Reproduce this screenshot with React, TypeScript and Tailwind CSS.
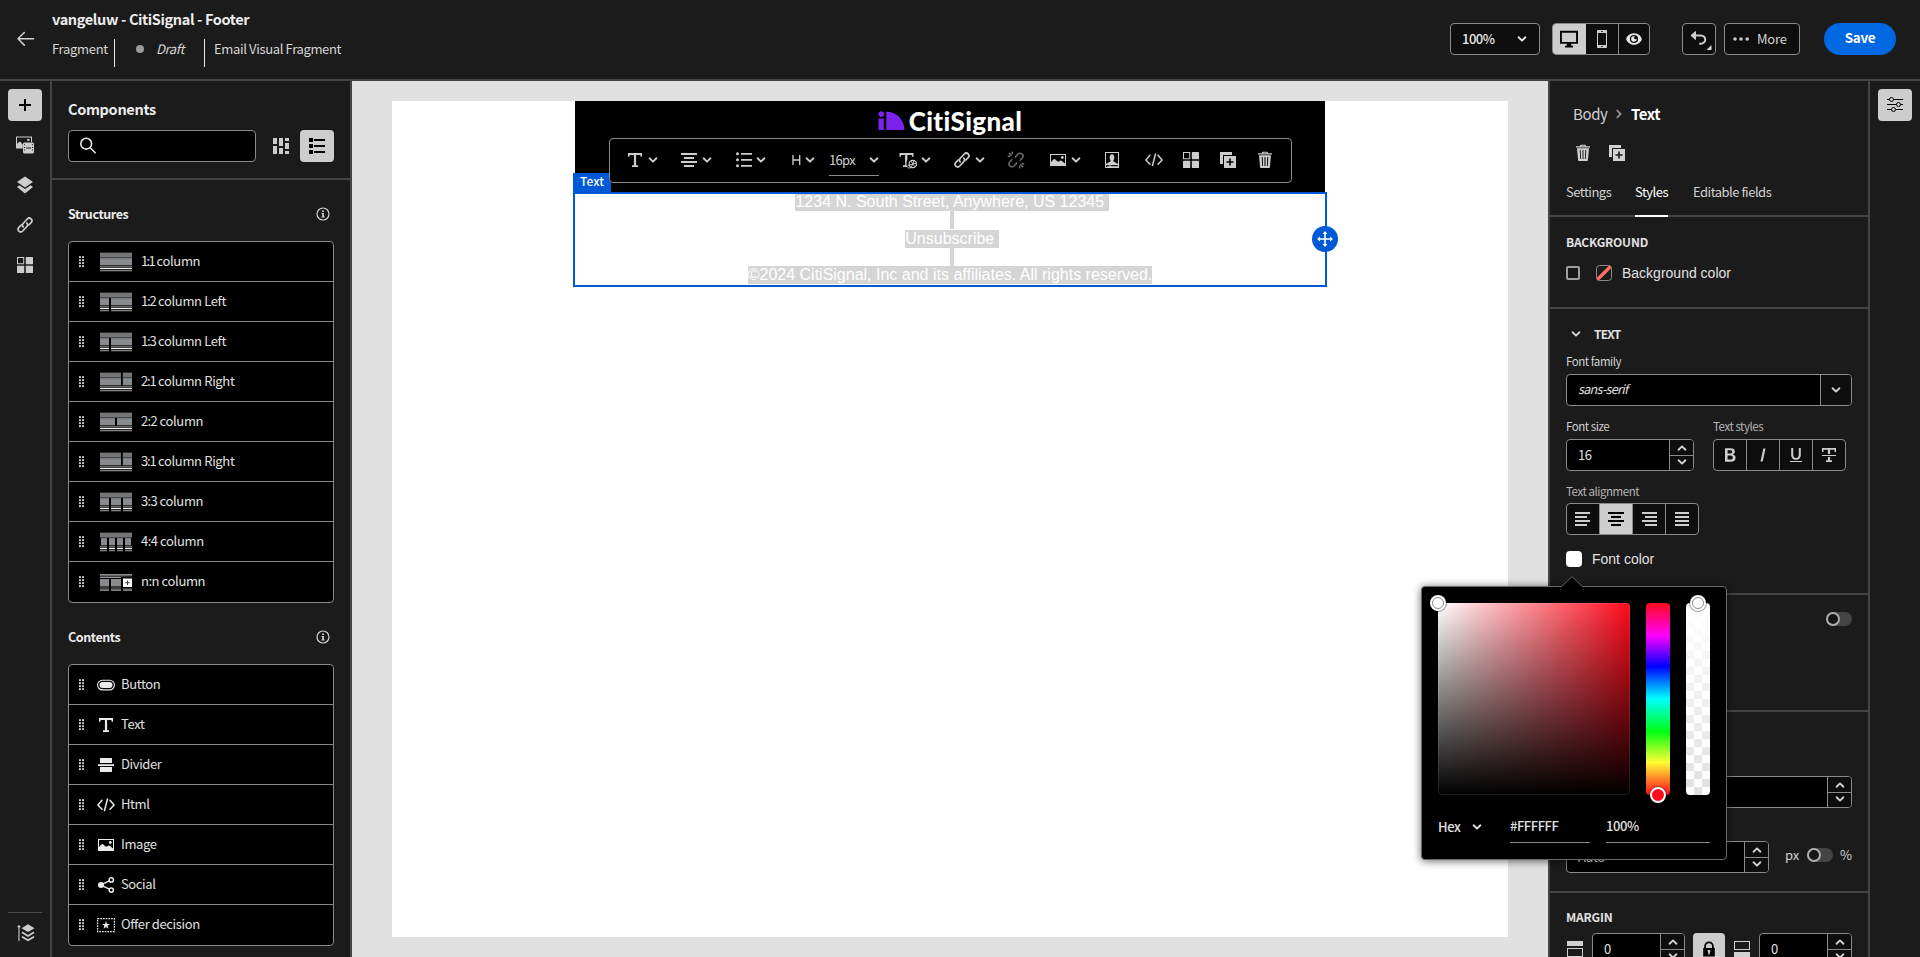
import type { ReactNode } from 'react';

/* ---------- icons ---------- */

type IconProps = { className?: string };

function Svg({ children, className = '', size = 18 }: { children: ReactNode; className?: string; size?: number }) {
  return (
    <svg width={size} height={size} viewBox="0 0 18 18" fill="currentColor" className={`block shrink-0 ${className}`}>
      {children}
    </svg>
  );
}

function Chevron({ className = '' }: IconProps) {
  return (
    <svg width="10" height="6" viewBox="0 0 10 6" fill="none" stroke="currentColor" strokeWidth="1.9" strokeLinecap="round" strokeLinejoin="round" className={`block shrink-0 ${className}`}>
      <path d="M1.6 1.3 5 4.6 8.4 1.3" />
    </svg>
  );
}

const TrashIcon = ({ className }: IconProps) => (
  <Svg className={className}>
    <path fillRule="evenodd" d="M6 2.2V1.8C6 1 6.600.8 7.200.8h3.600c.6 0 1.200.2 1.200 1v.4h4v1.200H2V2.200zM7.200 2.200h3.600v-.5H7.200zM3 4.200h12l-1.100 12.100a.8.8 0 0 1-.8.7H4.900a.8.8 0 0 1-.8-.7zM5.700 6l.5 9h.9L6.700 6zm2.800 0v9h1V6zm2.800 0-.4 9h.9l.5-9z" />
  </Svg>
);

const DuplicateIcon = ({ className }: IconProps) => (
  <Svg className={className}>
    <path d="M1 1h12v3H4v9H1z" />
    <path fillRule="evenodd" d="M5 5h12v12H5zM10.200 7.500v2.700H7.500v1.600h2.700v2.700h1.600v-2.700h2.700v-1.600h-2.700V7.500z" />
  </Svg>
);

const LinkIcon = ({ className }: IconProps) => (
  <Svg className={className}>
    <g fill="none" stroke="currentColor" strokeWidth="1.700" strokeLinecap="round">
      <path d="M7.200 10.900c-1.100-1.100-1-2.500.1-3.700l4-4.200c1.100-1.100 2.700-1.200 3.800-.2 1.100 1.100 1.100 2.600 0 3.800l-2.300 2.400" />
      <path d="M10.800 7.100c1.100 1.100 1 2.500-.1 3.700l-4 4.200c-1.100 1.100-2.700 1.200-3.800.2-1.100-1.100-1.100-2.600 0-3.800l2.300-2.400" />
    </g>
  </Svg>
);

const UnlinkIcon = ({ className }: IconProps) => (
  <Svg className={className}>
    <g fill="none" stroke="currentColor" strokeWidth="1.500" strokeLinecap="round">
      <path d="m8.300 6.100 2.600-2.800c1.100-1.100 3-1.300 4.200-.2 1.200 1.100 1.100 3 0 4.200l-2 2" />
      <path d="m9.700 11.900-2.600 2.800c-1.100 1.100-3 1.300-4.200.2-1.200-1.100-1.100-3 0-4.200l2-2" />
      <path d="M5.300 1.300v1.500M1.300 5.300h1.500M2.400 2.400l1.800 1.800M12.700 15.200v1.500M15.200 12.700h1.500M13.800 13.800l1.800 1.800" />
    </g>
  </Svg>
);

const GridIcon = ({ className }: IconProps) => (
  <Svg className={className}>
    <path fillRule="evenodd" d="M1 1h7.200v7.200H1zM2 2v5.200h5.200V2z" />
    <rect x="9.800" y="1" width="7.200" height="7.200" rx=".5" />
    <rect x="1" y="9.800" width="7.200" height="7.200" rx=".5" />
    <rect x="9.800" y="9.800" width="7.200" height="7.200" rx=".5" />
  </Svg>
);

const ImageIcon = ({ className }: IconProps) => (
  <Svg className={className}>
    <path fillRule="evenodd" d="M1 3h16v12H1zM2 4v7.200c1.300-1.500 2.500-3.200 3.500-3.200 1.200 0 2.800 2.800 3.700 2.800.7 0 1.500-1.300 2.400-1.300 1.300 0 2.700 1.500 4.400 3V4z" />
    <circle cx="13.300" cy="6.500" r="1.400" />
  </Svg>
);

const CodeIcon = ({ className }: IconProps) => (
  <Svg className={className}>
    <g fill="none" stroke="currentColor" strokeWidth="1.500" strokeLinecap="round" strokeLinejoin="round">
      <path d="M5 4.300.9 9 5 13.200M13 4.300 17.100 9 13 13.200M10.500 3 7.500 14.500" />
    </g>
  </Svg>
);

const TextIcon = ({ className }: IconProps) => (
  <Svg className={className}>
    <path d="M2 2h14v3.800h-1.300L14.300 4H10.100v10.300H12V16H6v-1.700h1.900V4H3.700L3.300 5.800H2z" />
  </Svg>
);

const TextGearIcon = ({ className }: IconProps) => (
  <Svg className={className}>
    <path d="M.5 2h14v3.800h-1.300L12.800 4H8.400v5L7.500 11v3.500L9 16H4v-1.700h2.100V4H2.200L1.800 5.800H.5z" />
    <g fill="none" stroke="currentColor">
      <circle cx="13.800" cy="13" r="3.700" strokeWidth="1.200" />
      <path d="M13.800 13 12 9.900M13.800 13l3.500-.8M13.800 13l-1.600 3.200M8.500 14.500l5.300-1.500M14.800 9.500l-1 3.500M13.800 13l2.200 2.800M8.500 16.800h4" strokeWidth=".9" />
    </g>
  </Svg>
);

const AlignIcon = ({ className, mode }: IconProps & { mode: 'left' | 'center' | 'right' | 'justify' }) => {
  const rows = {
    left: [[1, 15], [1, 12], [1, 15], [1, 12]],
    center: [[1, 16], [4, 10], [1, 16], [4, 10]],
    right: [[2, 15], [5, 12], [2, 15], [5, 12]],
    justify: [[2, 14], [2, 14], [2, 14], [2, 14]],
  }[mode];
  return (
    <Svg className={className}>
      {rows.map(([x, w], i) => (
        <rect key={i} x={x} y={2 + i * 4} width={w} height="2" />
      ))}
    </Svg>
  );
};

const BulletsIcon = ({ className }: IconProps) => (
  <Svg className={className}>
    <circle cx="2.500" cy="2.700" r="1.500" />
    <circle cx="2.500" cy="8.700" r="1.500" />
    <circle cx="2.500" cy="14.700" r="1.500" />
    <path d="M6 2h11v1.700H6zM6 8h11v1.700H6zM6 14h11v1.700H6z" />
  </Svg>
);

const PersonIcon = ({ className }: IconProps) => (
  <Svg className={className}>
    <path fillRule="evenodd" d="M2 1h14v16H2zM3 2v10.500h1.500c.3-1.400 2-1.500 3.100-2C8 10 7.200 9 6.900 8c-.5-2.300 0-4.700 2.100-4.700S11.600 5.700 11.100 8c-.3 1-1.100 2-.7 2.500 1.100.5 2.800.6 3.100 2H15V2zM3 14.500V16h1v-1.500zm3 0h9V14H3z" />
    <path d="M3.200 14.300h3v1H3.200zM8.200 14.300h6.600v1H8.200z" fill="#000" />
  </Svg>
);

const InfoIcon = ({ className }: IconProps) => (
  <svg width="14" height="14" viewBox="0 0 14 14" className={`block shrink-0 ${className}`}>
    <circle cx="7" cy="7" r="6" fill="none" stroke="currentColor" strokeWidth="1.200" />
    <path d="M6.100 3.400h1.800v1.500H6.100zM5.600 6h2.300v3.600h.7v.9H5.500v-.9h.7V6.900h-.6z" fill="currentColor" />
  </svg>
);

const Handle = ({ className = '' }: IconProps) => (
  <svg width="5" height="12" viewBox="0 0 5 12" fill="#d1d1d1" className={`block shrink-0 ${className}`}>
    {[0.2, 3.2, 6.2, 9.2].map((y) => (
      <g key={y}>
        <rect x="0" y={y} width="1.900" height="1.900" />
        <rect x="3.100" y={y} width="1.900" height="1.900" />
      </g>
    ))}
  </svg>
);

/* ---------- structure thumbnails ---------- */

type Gap = [x: number, width: number, y: number, height: number];

function Thumb({ gaps }: { gaps: Gap[] }) {
  return (
    <svg width="32" height="20" viewBox="0 0 32 20" className="block shrink-0">
      <rect y=".6" width="32" height="18.600" fill="#3c3c3c" />
      <rect y=".8" width="32" height="4.400" fill="#757575" />
      <rect y="6.200" width="32" height="7" fill="#878b8d" />
      <rect y="13.300" width="32" height="1" fill="#222" />
      <rect y="14.200" width="32" height=".8" fill="#777" />
      <rect y="15" width="32" height="1" fill="#111" />
      <rect y="15.800" width="32" height="1.200" fill="#f4f4f4" />
      <rect y="17" width="32" height="1" fill="#222" />
      <rect y="18" width="32" height="1.200" fill="#858585" />
      {gaps.map(([x, w, y, h], i) => (
        <rect key={i} x={x} y={y} width={w} height={h} fill="#000" />
      ))}
    </svg>
  );
}

function CustomThumb() {
  return (
    <svg width="32" height="20" viewBox="0 0 32 20" className="block shrink-0">
      <path d="M0 2h32v1.800H0z" fill="#8a8a8a" />
      <path d="M0 3.800h32v1H0z" fill="#333" />
      <path d="M0 4.800h21v1.200H0z" fill="#9a9a9a" />
      <path d="M0 7h9v7H0zM11 7h10v7H11z" fill="#878b8d" />
      <path d="M0 14h9v2H0zM11 14h10v2H11z" fill="#3a3a3a" />
      <path d="M0 16.500h9v2.500H0zM11 16.500h10v2.500H11zM23 16.500h9v2.500h-9z" fill="#808080" />
      <path d="M0 17.500h9v.6H0zM11 17.500h10v.6H11zM23 17.500h9v.6h-9z" fill="#444" />
      <path d="M23 6.500h9v8.500h-9z" fill="#fff" />
      <path d="M27 8.500h1v1.800h1.800v1H28v1.800h-1v-1.800h-1.800v-1H27z" fill="#444" />
    </svg>
  );
}

const structures: { ratio: string; tracking: string; label: string; thumb: ReactNode }[] = [
  { ratio: '1:1', tracking: 'tracking-[-1.700px]', label: 'column', thumb: <Thumb gaps={[]} /> },
  { ratio: '1:2', tracking: 'tracking-[-1.200px]', label: 'column Left', thumb: <Thumb gaps={[[9, 2, 6, 14]]} /> },
  { ratio: '1:3', tracking: 'tracking-[-1.200px]', label: 'column Left', thumb: <Thumb gaps={[[9, 2, 6, 14]]} /> },
  { ratio: '2:1', tracking: 'tracking-[-1.200px]', label: 'column Right', thumb: <Thumb gaps={[[21, 1.8, 0, 14]]} /> },
  { ratio: '2:2', tracking: 'tracking-[-0.700px]', label: 'column', thumb: <Thumb gaps={[[15, 2, 6, 8]]} /> },
  { ratio: '3:1', tracking: 'tracking-[-1.200px]', label: 'column Right', thumb: <Thumb gaps={[[21, 1.8, 0, 14]]} /> },
  { ratio: '3:3', tracking: 'tracking-[-0.700px]', label: 'column', thumb: <Thumb gaps={[[9, 2, 6, 14], [21, 2, 6, 14]]} /> },
  { ratio: '4:4', tracking: 'tracking-[-0.500px]', label: 'column', thumb: <Thumb gaps={[[0, 1, 6, 8], [7, 2, 6, 14], [15, 2, 6, 14], [23, 2, 6, 14], [31, 1, 6, 8]]} /> },
  { ratio: 'n:n', tracking: 'tracking-[-0.500px]', label: 'column', thumb: <CustomThumb /> },
];

const contents: { label: string; icon: ReactNode }[] = [
  {
    label: 'Button',
    icon: (
      <Svg>
        <rect x=".6" y="4.300" width="16.800" height="9.600" rx="4.800" fill="none" stroke="currentColor" strokeWidth="1.100" />
        <rect x="2.500" y="6.100" width="13" height="6" rx="3" />
      </Svg>
    ),
  },
  { label: 'Text', icon: <TextIcon /> },
  {
    label: 'Divider',
    icon: (
      <Svg>
        <path d="M3 2.500c0-.3.200-.5.500-.5h11c.3 0 .5.200.5.500V7H3zM1 8.200h16v1.700H1zM3 11h12v4.500c0 .3-.2.500-.5.500h-11a.5.500 0 0 1-.5-.5z" />
      </Svg>
    ),
  },
  { label: 'Html', icon: <CodeIcon /> },
  { label: 'Image', icon: <ImageIcon /> },
  {
    label: 'Social',
    icon: (
      <Svg>
        <circle cx="4" cy="9" r="3" />
        <g fill="none" stroke="currentColor" strokeWidth="1.500">
          <circle cx="14.300" cy="3.900" r="2.100" />
          <circle cx="14.300" cy="14.100" r="2.100" />
          <path d="m5 8.400 7.300-3.500M5 9.600l7.300 3.500" />
        </g>
      </Svg>
    ),
  },
  {
    label: 'Offer decision',
    icon: (
      <Svg>
        <rect x=".6" y="2.600" width="16.800" height="13" fill="none" stroke="currentColor" strokeWidth="1.200" strokeDasharray="1.700 1" />
        <path d="m9 5 1 2.900h3L10.600 9.700l.9 3L9 10.900l-2.500 1.800.9-3L5 7.900h3z" />
      </Svg>
    ),
  },
];

/* ---------- shared pieces ---------- */

function Stepper({ value, className = '' }: { value?: string; className?: string }) {
  return (
    <div className={`flex h-8 shrink-0 overflow-hidden rounded border border-[#8a8a8a] bg-black ${className}`}>
      <div className="flex min-w-0 flex-1 items-center pb-px pl-[11px] text-[13px] leading-none tracking-[-0.4px] text-[#e0e0e0]">{value}</div>
      <div className="flex w-6 shrink-0 flex-col border-l border-[#8a8a8a] bg-[#0e0e0e] text-[#d1d1d1]">
        <div className="flex h-[15px] items-center justify-center pt-px">
          <Chevron className="rotate-180" />
        </div>
        <div className="flex flex-1 items-center justify-center border-t border-[#8a8a8a] pb-[2px]">
          <Chevron />
        </div>
      </div>
    </div>
  );
}

function Toggle({ className = '' }: IconProps) {
  return (
    <div className={`h-[14px] w-[26px] shrink-0 rounded-full bg-[#444] ${className}`}>
      <div className="size-[14px] rounded-full border-2 border-[#adadad] bg-[#161616]" />
    </div>
  );
}

function Divider() {
  return <div className="h-0.5 shrink-0 bg-[#444]" />;
}

/* ---------- header ---------- */

function Header() {
  return (
    <header className="flex h-[81px] shrink-0 border-b-2 border-[#444]">
      <div className="w-[52px] shrink-0 pt-[31px] pl-[17px]">
        <svg width="18" height="16" viewBox="0 0 18 16" fill="none" stroke="#d1d1d1" strokeWidth="1.500" strokeLinecap="round" strokeLinejoin="round">
          <path d="M16.500 7.800H1.200M7.300 1.500 1 7.800l6.300 6.300" />
        </svg>
      </div>
      <div className="flex flex-col">
        <div className="mt-[9px] h-[21px] text-[14.500px] leading-5 font-bold tracking-[-0.37px] whitespace-nowrap text-[#ebebeb]">vangeluw - CitiSignal - Footer</div>
        <div className="mt-[9px] flex h-7 text-[13px] leading-[20px] whitespace-nowrap text-[#d6d6d6]">
          <div className="w-[62px] tracking-[-0.3px]">Fragment</div>
          <div className="flex w-[90px] border-l border-[#e8e8e8] pl-[21px]">
            <div className="mt-[6px] size-2 rounded-full bg-[#9c9c9c]" />
            <div className="ml-[12px] tracking-[-0.4px] italic">Draft</div>
          </div>
          <div className="border-l border-[#e8e8e8] pl-[9px] tracking-[-0.35px]">Email Visual Fragment</div>
        </div>
      </div>
      <div className="ml-auto flex items-start pt-[23px] pr-6">
        <div className="flex h-8 w-[90px] items-center rounded border border-[#8a8a8a] bg-[#0e0e0e] pl-[11px] text-[13px] font-medium tracking-[-0.5px] text-[#e8e8e8]">
          100%
          <Chevron className="mr-[12px] ml-auto" />
        </div>
        <div className="ml-3 flex h-8 w-[98px] overflow-hidden rounded border border-[#8a8a8a] bg-[#0e0e0e]">
          <div className="-my-px -ml-px flex w-[34px] items-center justify-center bg-[#cdcdcd] text-black">
            <Svg>
              <path fillRule="evenodd" d="M0 .8h18v13h-7l.4 2h1.600v1.700H5v-1.700h1.600l.4-2H0zM1.900 2.700v9.200h14.200V2.700z" />
            </Svg>
          </div>
          <div className="flex w-[33px] items-center justify-center border-r border-[#8a8a8a] text-[#cdcdcd]">
            <Svg>
              <path fillRule="evenodd" d="M5 0h8c.6 0 1 .4 1 1v16c0 .6-.4 1-1 1H5c-.6 0-1-.4-1-1V1c0-.6.400-1 1-1zM5 3v12h8V3zM8 1.200v.7h2v-.7zm1 14.500a.8.800 0 1 0 0 1.600.8.800 0 0 0 0-1.600z" />
            </Svg>
          </div>
          <div className="flex flex-1 items-center justify-center text-[#e8e8e8]">
            <Svg className="mr-px">
              <path fillRule="evenodd" d="M9 3.200c4.300 0 7.800 3.600 7.800 5.800S13.300 14.800 9 14.800 1.200 11.200 1.200 9 4.700 3.200 9 3.200zm0 1.700a4.100 4.100 0 1 0 0 8.200 4.100 4.100 0 0 0 0-8.200z" />
              <path d="M9 6.300c.5 0 .9.100 1.300.3a1.300 1.300 0 1 0 1.200 1.900A2.700 2.700 0 1 1 9 6.300z" />
            </Svg>
          </div>
        </div>
        <div className="ml-8 flex h-8 w-[34px] items-center justify-center rounded border border-[#8a8a8a] bg-[#0e0e0e] text-[#cdcdcd]">
          <svg width="26" height="22" viewBox="0 0 26 22" className="block">
            <path d="M6.500 7.500h8.200c6 0 6 8.200 0 8.200h-1.500" fill="none" stroke="currentColor" strokeWidth="2" />
            <path d="M9.500 3.500v8L5 7.500z" fill="currentColor" stroke="currentColor" strokeWidth="1" strokeLinejoin="round" />
            <path d="M25.500 17v5h-5z" fill="#d8d8d8" />
          </svg>
        </div>
        <div className="ml-2 flex h-8 w-[76px] items-center rounded border border-[#8a8a8a] bg-[#0e0e0e] pl-[8px] text-[13px] text-[#d6d6d6]">
          <svg width="17" height="4" viewBox="0 0 17 4" fill="#c8c8c8">
            <circle cx="2" cy="2" r="1.800" />
            <circle cx="8" cy="2" r="1.800" />
            <circle cx="14.200" cy="2" r="1.800" />
          </svg>
          <span className="ml-[7px] tracking-[-0.2px]">More</span>
        </div>
        <div className="ml-6 flex h-8 w-[72px] items-center justify-center rounded-full bg-[#0068e0] pb-[3px] text-[13.500px] font-bold tracking-[-0.3px] text-white">Save</div>
      </div>
    </header>
  );
}

/* ---------- left ---------- */

function LeftRail() {
  return (
    <nav className="flex w-[52px] shrink-0 flex-col items-start border-r-2 border-[#444] pl-2 text-[#cdcdcd]">
      <div className="mt-2 flex h-8 w-[34px] items-center justify-center rounded bg-[#cdcdcd] text-black">
        <Svg>
          <path d="M8 3h2v5h5v2h-5v5H8v-5H3V8h5z" />
        </Svg>
      </div>
      <div className="mt-2 flex h-8 w-[34px] items-center justify-center">
        <Svg>
          <path fillRule="evenodd" d="M0 .500h16V6h-1V1.500H1v6.600C2.500 6.500 3.500 5.500 4.500 6L6.800 8.500V12.500H0z" />
          <circle cx="12.400" cy="3.900" r="1.200" />
          <path fillRule="evenodd" d="M8.500 6.500h8c.8 0 1.500.6 1.500 1.500v8c0 .9-.6 1.500-1.500 1.500h-8C7.600 17.500 7 16.900 7 16V8c0-.9.600-1.500 1.500-1.500zM8 8.300v1h1v-1zm0 2.600v1h1v-1zm0 2.600v1h1v-1zM16 8.300v1h1v-1zm0 2.600v1h1v-1zm0 2.600v1h1v-1zM10 11.500v1h5v-1z" />
        </Svg>
      </div>
      <div className="mt-2 flex h-8 w-[34px] items-center justify-center">
        <Svg>
          <path d="M9 .5 17 6 9 11.500 1 6zM3.300 9.200 9 13.100l5.700-3.900L17 11l-8 6.400L1 11z" />
        </Svg>
      </div>
      <div className="mt-2 flex h-8 w-[34px] items-center justify-center">
        <LinkIcon />
      </div>
      <div className="mt-2 flex h-8 w-[34px] items-center justify-center">
        <GridIcon />
      </div>
      <div className="mt-auto mb-[15px] w-[34px] border-t border-[#4b4b4b] pt-[11px] pl-[9px]">
        <svg width="18" height="18" viewBox="0 0 18 18" fill="currentColor" className="block">
          <path d="M1.400 3h1.100v14H1.400z" />
          <path d="M0 3.300 1.950.8 3.900 3.300z" />
          <path d="m11 .3 6.500 3.900L11 8.100 4.500 4.200z" />
          <path d="m5 8.300 6 3.600 6-3.600M5 12.700l6 3.600 6-3.600" fill="none" stroke="currentColor" strokeWidth="1.800" />
        </svg>
      </div>
    </nav>
  );
}

function ComponentsPanel() {
  return (
    <aside className="flex w-[300px] shrink-0 flex-col border-r-2 border-[#444] *:shrink-0">
      <div className="mt-[18px] ml-4 h-5 text-[14.500px] leading-5 font-bold tracking-[-0.32px] text-[#ebebeb]">Components</div>
      <div className="mt-[11px] ml-4 flex h-8 items-center">
        <div className="flex h-8 w-[188px] items-center rounded border border-[#8a8a8a] bg-black pl-[10px] text-[#e8e8e8]">
          <svg width="18" height="18" viewBox="0 0 18 18" fill="none" stroke="currentColor" strokeWidth="1.600" strokeLinecap="round">
            <circle cx="7.200" cy="6.700" r="5.400" />
            <path d="m11.200 10.700 5 5" />
          </svg>
        </div>
        <svg width="18" height="18" viewBox="0 0 18 18" fill="#cdcdcd" className="ml-4 block">
          <path d="M1 1h4v6H1zM1 9h4v8H1zM7 1h4v8H7zM7 11h4v6H7zM13 1h4v3h-4zM13 6h4v6h-4zM13 14h4v3h-4z" />
        </svg>
        <div className="ml-[10px] flex h-8 w-[34px] items-center justify-center rounded bg-[#cdcdcd] text-black">
          <Svg>
            <path d="M1 1h4v4H1zM6 2h11v2H6zM1 7h4v4H1zM6 8h11v2H6zM1 13h4v4H1zM6 14h11v2H6z" />
          </Svg>
        </div>
      </div>
      <div className="mt-4">
        <Divider />
      </div>
      <div className="mt-6 flex h-5 items-center pr-[20px] pl-4">
        <span className="text-[12.500px] leading-5 font-bold tracking-[-0.42px] text-[#ebebeb]">Structures</span>
        <InfoIcon className="ml-auto text-[#d1d1d1]" />
      </div>
      <div className="mt-[17px] ml-4 w-[266px] divide-y divide-[#8a8a8a] rounded border border-[#8a8a8a] bg-black">
        {structures.map((s) => (
          <div key={s.ratio} className="flex h-10 items-center">
            <Handle className="ml-[10px]" />
            <div className="ml-4">{s.thumb}</div>
            <span className="ml-[9px] pb-[2px] text-[13px] leading-5 tracking-[-0.35px] text-[#e0e0e0]">
              <span className={s.tracking}>{s.ratio}</span> {s.label}
            </span>
          </div>
        ))}
      </div>
      <div className="mt-[24px] flex h-5 items-center pr-[20px] pl-4">
        <span className="text-[12.500px] leading-5 font-bold tracking-[-0.42px] text-[#ebebeb]">Contents</span>
        <InfoIcon className="ml-auto text-[#d1d1d1]" />
      </div>
      <div className="mt-[17px] ml-4 w-[266px] divide-y divide-[#8a8a8a] rounded border border-[#8a8a8a] bg-black">
        {contents.map((c) => (
          <div key={c.label} className="flex h-10 items-center">
            <Handle className="ml-[10px]" />
            <div className="ml-[13px] text-[#ebebeb]">{c.icon}</div>
            <span className="ml-[6px] pb-[2px] text-[13px] leading-5 tracking-[-0.38px] text-[#e0e0e0]">{c.label}</span>
          </div>
        ))}
      </div>
    </aside>
  );
}

/* ---------- canvas ---------- */

function Toolbar() {
  return (
    <div className="absolute top-[37px] left-[34px] flex h-[45px] w-[683px] items-center rounded border border-[#8a8a8a] bg-black pb-px text-[#cdcdcd]">
      <TextIcon className="ml-4" />
      <Chevron className="ml-1" />
      <AlignIcon mode="center" className="ml-[22px]" />
      <Chevron className="ml-1" />
      <BulletsIcon className="ml-[23px]" />
      <Chevron className="ml-[3px]" />
      <svg width="9" height="10" viewBox="0 0 9 10" fill="none" stroke="currentColor" strokeWidth="1.300" className="ml-[26px]">
        <path d="M1 0v10M7.700 0v10M1 5h6.700" />
      </svg>
      <Chevron className="ml-1" />
      <div className="ml-[14px] flex h-[32px] w-[50px] items-center border-b border-[#8a8a8a] text-[13px] leading-none tracking-[-0.7px] text-[#d1d1d1]">
        16px
        <Chevron className="ml-auto" />
      </div>
      <TextGearIcon className="ml-5" />
      <Chevron className="ml-1" />
      <LinkIcon className="ml-[22px]" />
      <Chevron className="ml-1" />
      <UnlinkIcon className="ml-[22px] text-[#6d6d6d]" />
      <ImageIcon className="ml-6" />
      <Chevron className="ml-1" />
      <PersonIcon className="ml-[22px]" />
      <CodeIcon className="ml-6" />
      <GridIcon className="ml-[19px]" />
      <DuplicateIcon className="ml-[19px]" />
      <TrashIcon className="ml-[19px]" />
    </div>
  );
}

function Canvas() {
  return (
    <main className="min-w-0 flex-1 bg-[#e1e1e1] px-10 pt-5 pb-5">
      <div className="h-[836px] bg-white">
        <div className="relative mx-auto w-[750px]">
          <div className="flex h-[91px] items-start justify-center bg-black pt-[7px]">
            <svg width="28" height="22" viewBox="0 0 28 22" fill="#7c22ee" className="mt-px block">
              <circle cx="3.300" cy="5.100" r="2.800" />
              <path d="M.5 9.400h5.300V21H.5zM8.300 2.500C18.500 2.500 26.500 10.800 26.500 21H8.300z" />
            </svg>
            <span className="ml-[3px] font-['Lato',sans-serif] text-[26px] leading-[26px] font-black tracking-[0.35px] text-white">CitiSignal</span>
          </div>
          <div className="-mx-0.5 flex h-[95px] flex-col items-center overflow-hidden border-2 border-[#0059d6] font-['Liberation_Sans',Arial,sans-serif] text-[16px] leading-[18px] whitespace-pre text-white">
            <div className="-mt-px ml-1 bg-[#d5d5d5]">{'1234 N. South Street, Anywhere, US 12345 '}</div>
            <div className="ml-[3px] h-[18px] w-1 bg-[#d5d5d5]" />
            <div className="mt-px ml-1 bg-[#d5d5d5]">{'Unsubscribe '}</div>
            <div className="ml-[3px] h-[18px] w-1 bg-[#d5d5d5]" />
            <div className="bg-[#d5d5d5]">©2024 CitiSignal, Inc and its affiliates. All rights reserved.</div>
          </div>
          <div className="absolute top-[72px] -left-0.5 h-5 w-[38px] bg-[#0059d6] text-center text-[12px] leading-[16px] font-medium text-white">Text</div>
          <div className="absolute top-[125px] -right-[13px] flex size-[26px] items-center justify-center rounded-full bg-[#0059d6] text-white">
            <Svg>
              <path d="M8.200 3.500h1.600v4.700h4.700v1.600H9.800v4.700H8.200V9.800H3.500V8.200h4.700z" />
              <path d="M9 1l2.500 3h-5zM9 17l2.500-3h-5zM1 9l3-2.500v5zM17 9l-3-2.500v5z" />
            </Svg>
          </div>
          <Toolbar />
        </div>
      </div>
    </main>
  );
}

/* ---------- right ---------- */

function ColorPopover() {
  return (
    <div className="absolute top-[25px] -left-[145px] z-10 h-[274px] w-[306px] rounded border border-[#6a6a6a] bg-black px-4 pt-4 shadow-[0_1px_8px_rgba(0,0,0,0.6)]">
      <svg width="22" height="12" viewBox="0 0 22 12" className="absolute -top-[11px] left-[139px] block">
        <path d="M0 12V11L11 .8 22 11v1z" fill="#000" />
        <path d="M.3 10.700 11 .7l10.700 10" fill="none" stroke="#6a6a6a" />
      </svg>
      <div className="flex h-48">
        <div className="relative w-48 rounded border border-white/10 bg-[linear-gradient(to_top,#000,transparent),linear-gradient(to_right,#fff,#ff0a1b)] bg-origin-border">
          <div className="absolute -top-[9px] -left-[9px] flex size-4 items-center justify-center rounded-full bg-white shadow-[0_0_0_1px_rgba(0,0,0,0.4)]">
            <div className="size-[12px] rounded-full border border-[#8e8e8e]" />
          </div>
        </div>
        <div className="relative ml-4 w-6 rounded bg-[linear-gradient(to_bottom,#ff0a1b_0%,#ff00ff_17%,#0000ff_33%,#00ffff_50%,#00ff14_67%,#ffff33_83%,#ff0a1b_100%)]">
          <div className="absolute -bottom-2 left-1 size-4 rounded-full border-2 border-white bg-[#ff0a1b] shadow-[0_0_0_1px_rgba(0,0,0,0.4)]" />
        </div>
        <div className="relative ml-4 w-6 rounded bg-[linear-gradient(to_bottom,#fff,transparent),repeating-conic-gradient(#fff_0_25%,#e0e0e0_0_50%)] bg-[size:100%_100%,16px_16px]">
          <div className="absolute -top-2 left-1 flex size-4 items-center justify-center rounded-full bg-white shadow-[0_0_0_1px_rgba(0,0,0,0.4)]">
            <div className="size-[12px] rounded-full border border-[#8e8e8e]" />
          </div>
        </div>
      </div>
      <div className="mt-4 flex h-8 text-[13px] leading-[29px] font-medium tracking-[-0.45px] text-[#e0e0e0]">
        <div className="w-[34px] pt-px">Hex</div>
        <Chevron className="mt-[13px]" />
        <div className="ml-7 w-20 border-b border-[#8a8a8a]">#FFFFFF</div>
        <div className="ml-4 w-[104px] border-b border-[#8a8a8a]">100%</div>
      </div>
    </div>
  );
}

function ButtonGroup({ children, className = '' }: { children: ReactNode; className?: string }) {
  return (
    <div className={`flex h-8 w-[133px] divide-x divide-[#8a8a8a] overflow-hidden rounded border border-[#8a8a8a] bg-[#0e0e0e] text-[#cdcdcd] ${className}`}>
      {children}
    </div>
  );
}

function Inspector() {
  const cell = 'flex flex-1 items-center justify-center';
  const label = 'h-4 text-[11.500px] leading-4 tracking-[-0.45px] whitespace-nowrap';
  return (
    <aside className="flex w-[322px] shrink-0 flex-col border-x-2 border-[#444] text-[#d1d1d1] *:shrink-0">
      <div className="mt-[22px] ml-[23px] flex h-[21px] items-center text-[15px] leading-5">
        <span className="w-[34px] tracking-[-0.4px]">Body</span>
        <Chevron className="ml-[7px] -rotate-90 text-[#8a8a8a]" />
        <span className="ml-[7px] font-bold tracking-[-0.4px] text-white">Text</span>
      </div>
      <div className="mt-[20px] ml-6 flex gap-4">
        <TrashIcon />
        <DuplicateIcon />
      </div>
      <div className="mt-[20px] ml-4 flex h-[33px] items-start text-[13px] leading-5 tracking-[-0.5px]">
        <div className="w-[69px]">Settings</div>
        <div className="w-[33px] whitespace-nowrap text-white">Styles</div>
        <div className="ml-[25px] whitespace-nowrap">Editable fields</div>
      </div>
      <div className="h-0.5 bg-[#444] pl-[85px]">
        <div className="h-0.5 w-[33px] bg-white" />
      </div>

      <div className="mt-[17px] ml-4 h-4 text-[12px] leading-4 font-bold tracking-[-0.2px] text-[#e0e0e0]">BACKGROUND</div>
      <div className="mt-[15px] ml-4 flex h-4 items-center">
        <div className="size-[14px] rounded-[2px] border-2 border-[#9e9e9e] bg-[#161616]" />
        <svg width="16" height="16" viewBox="0 0 16 16" className="ml-4 block">
          <rect x=".5" y=".5" width="15" height="15" rx="3" fill="#1b1b1b" stroke="#8a8a8a" />
          <path d="M1.500 14.500 14.500 1.500" stroke="#ff6f61" strokeWidth="3.200" />
        </svg>
        <span className="ml-[10px] font-['Liberation_Sans',Arial,sans-serif] text-[14px] leading-4 text-[#e0e0e0]">Background color</span>
      </div>
      <div className="mt-[26px]">
        <Divider />
      </div>

      <div className="mt-[17px] ml-[21px] flex h-4 items-center">
        <Chevron />
        <span className="ml-[13px] text-[12px] leading-4 font-bold tracking-[-0.8px] text-[#e0e0e0]">TEXT</span>
      </div>
      <div className={`mt-[11px] ml-4 ${label}`}>Font family</div>
      <div className="mt-[5px] ml-4 flex h-8 w-[286px] overflow-hidden rounded border border-[#8a8a8a] bg-black">
        <div className="flex flex-1 items-center pb-0.5 pl-[11px] text-[12.500px] tracking-[-0.65px] text-[#e0e0e0] italic">sans-serif</div>
        <div className="flex w-[31px] items-center justify-center border-l border-[#8a8a8a] bg-[#0e0e0e]">
          <Chevron />
        </div>
      </div>
      <div className="mt-3 ml-4 flex">
        <div className="w-[147px]">
          <div className={label}>Font size</div>
          <Stepper value="16" className="mt-[5px] w-32" />
        </div>
        <div>
          <div className={`text-[#b5b5b5] ${label}`}>Text styles</div>
          <ButtonGroup className="mt-[5px]">
            <div className={cell}>
              <Svg>
                <path fillRule="evenodd" d="M4 2.200h5.600c2.800 0 4.300 1.200 4.300 3.300 0 1.500-.8 2.500-2.100 2.900 1.700.3 2.800 1.500 2.800 3.300 0 2.600-1.900 4-4.900 4H4zM6.600 4.300v3.200h2.600c1.300 0 2-.6 2-1.700 0-1-.7-1.500-2-1.500zM6.600 9.500v4.100h2.900c1.500 0 2.300-.7 2.300-2.100 0-1.300-.9-2-2.500-2z" />
              </Svg>
            </div>
            <div className={cell}>
              <Svg>
                <path d="M9.300 2.500h2.200L8.700 15.500H6.500z" />
              </Svg>
            </div>
            <div className={cell}>
              <Svg>
                <path d="M4.200 2h2v6.500c0 2.500 1 3.500 2.800 3.500s2.800-1 2.800-3.500V2h2v6.500c0 3.700-1.800 5.200-4.800 5.200s-4.800-1.500-4.800-5.200zM3 15h12v1H3z" />
              </Svg>
            </div>
            <div className={cell}>
              <Svg>
                <path d="M2 2h14v4h-1.500V3.800h-4.400V8H7.900V3.800H3.500V6H2zM2 9h14v1H2zM7.900 11h2.200v3.300H12V16H6v-1.700h1.900z" />
              </Svg>
            </div>
          </ButtonGroup>
        </div>
      </div>
      <div className={`mt-3 ml-4 text-[#b5b5b5] ${label}`}>Text alignment</div>
      <ButtonGroup className="mt-1 ml-4">
        <div className={cell}>
          <AlignIcon mode="left" />
        </div>
        <div className={`${cell} -my-px bg-[#cdcdcd] text-black`}>
          <AlignIcon mode="center" />
        </div>
        <div className={cell}>
          <AlignIcon mode="right" />
        </div>
        <div className={cell}>
          <AlignIcon mode="justify" />
        </div>
      </ButtonGroup>
      <div className="relative mt-[10px] ml-4 h-[38px] py-[6px]">
        <div className="flex h-4 items-center">
          <div className="size-4 rounded bg-white" />
          <span className="ml-[10px] font-['Liberation_Sans',Arial,sans-serif] text-[14px] leading-4 text-[#e0e0e0]">Font color</span>
        </div>
        <div className="absolute top-[16px] left-0">
          <ColorPopover />
        </div>
      </div>
      <div className="mt-[10px]">
        <Divider />
      </div>

      <div className="flex h-[115px] justify-end pt-[17px] pr-4">
        <Toggle />
      </div>
      <Divider />

      <div className="mt-[64px] ml-4">
        <Stepper className="w-[286px]" />
      </div>
      <div className="mt-[33px] ml-4 flex items-center text-[13px] leading-none">
        <Stepper value="Auto" className="w-[203px]" />
        <span className="-mt-[5px] ml-4 w-[22px]">px</span>
        <Toggle className="-mt-1" />
        <span className="-mt-[5px] ml-[7px]">%</span>
      </div>
      <div className="mt-[18px]">
        <Divider />
      </div>

      <div className="mt-4 ml-4 h-4 text-[12px] leading-4 font-bold tracking-[-0.2px] text-[#e0e0e0]">MARGIN</div>
      <div className="mt-2 ml-4 flex h-8 items-center">
        <Svg>
          <path fillRule="evenodd" d="M1 1h16v5H1zM1 8h16v9H1zM2 9v7h14V9z" />
        </Svg>
        <Stepper value="0" className="ml-2 w-[93px]" />
        <div className="ml-2 flex size-8 items-center justify-center rounded bg-[#cdcdcd] text-black">
          <Svg>
            <path fillRule="evenodd" d="M3.200 8h1V6.500C4.200 3.500 6 1.500 9 1.500s4.800 2 4.800 5V8h1v8.500H3.200zM6 8h6V6.500c0-2-1-3.200-3-3.200s-3 1.200-3 3.200zm3 1.700a1.500 1.500 0 0 0-.8 2.700v2h1.600v-2A1.500 1.500 0 0 0 9 9.700z" />
          </Svg>
        </div>
        <Svg className="ml-2">
          <path fillRule="evenodd" d="M1 1h16v9H1zM2 2v7h14V2zM1 12h16v5H1z" />
        </Svg>
        <Stepper value="0" className="ml-2 w-[93px]" />
      </div>
    </aside>
  );
}

function RightRail() {
  return (
    <nav className="w-[50px] shrink-0 pt-2 pl-2">
      <div className="flex h-8 w-[34px] items-center justify-center rounded bg-[#cdcdcd] text-black">
        <svg width="18" height="18" viewBox="0 0 18 18" fill="none" stroke="currentColor" className="block">
          <path d="M1 3.500h2.500M7.500 3.500H17M1 8.500h9.500M14.500 8.500H17M1 13.500h4.500M9.500 13.500H17" />
          <circle cx="5.500" cy="3.500" r="2" />
          <circle cx="12.500" cy="8.500" r="2" />
          <circle cx="7.500" cy="13.500" r="2" />
        </svg>
      </div>
    </nav>
  );
}

export default function App() {
  return (
    <div className="flex h-[957px] w-[1920px] flex-col overflow-hidden bg-[#1b1b1b] font-['Noto_Sans_CJK_SC','Noto_Sans',sans-serif]">
      <Header />
      <div className="flex min-h-0 flex-1">
        <LeftRail />
        <ComponentsPanel />
        <Canvas />
        <Inspector />
        <RightRail />
      </div>
    </div>
  );
}
